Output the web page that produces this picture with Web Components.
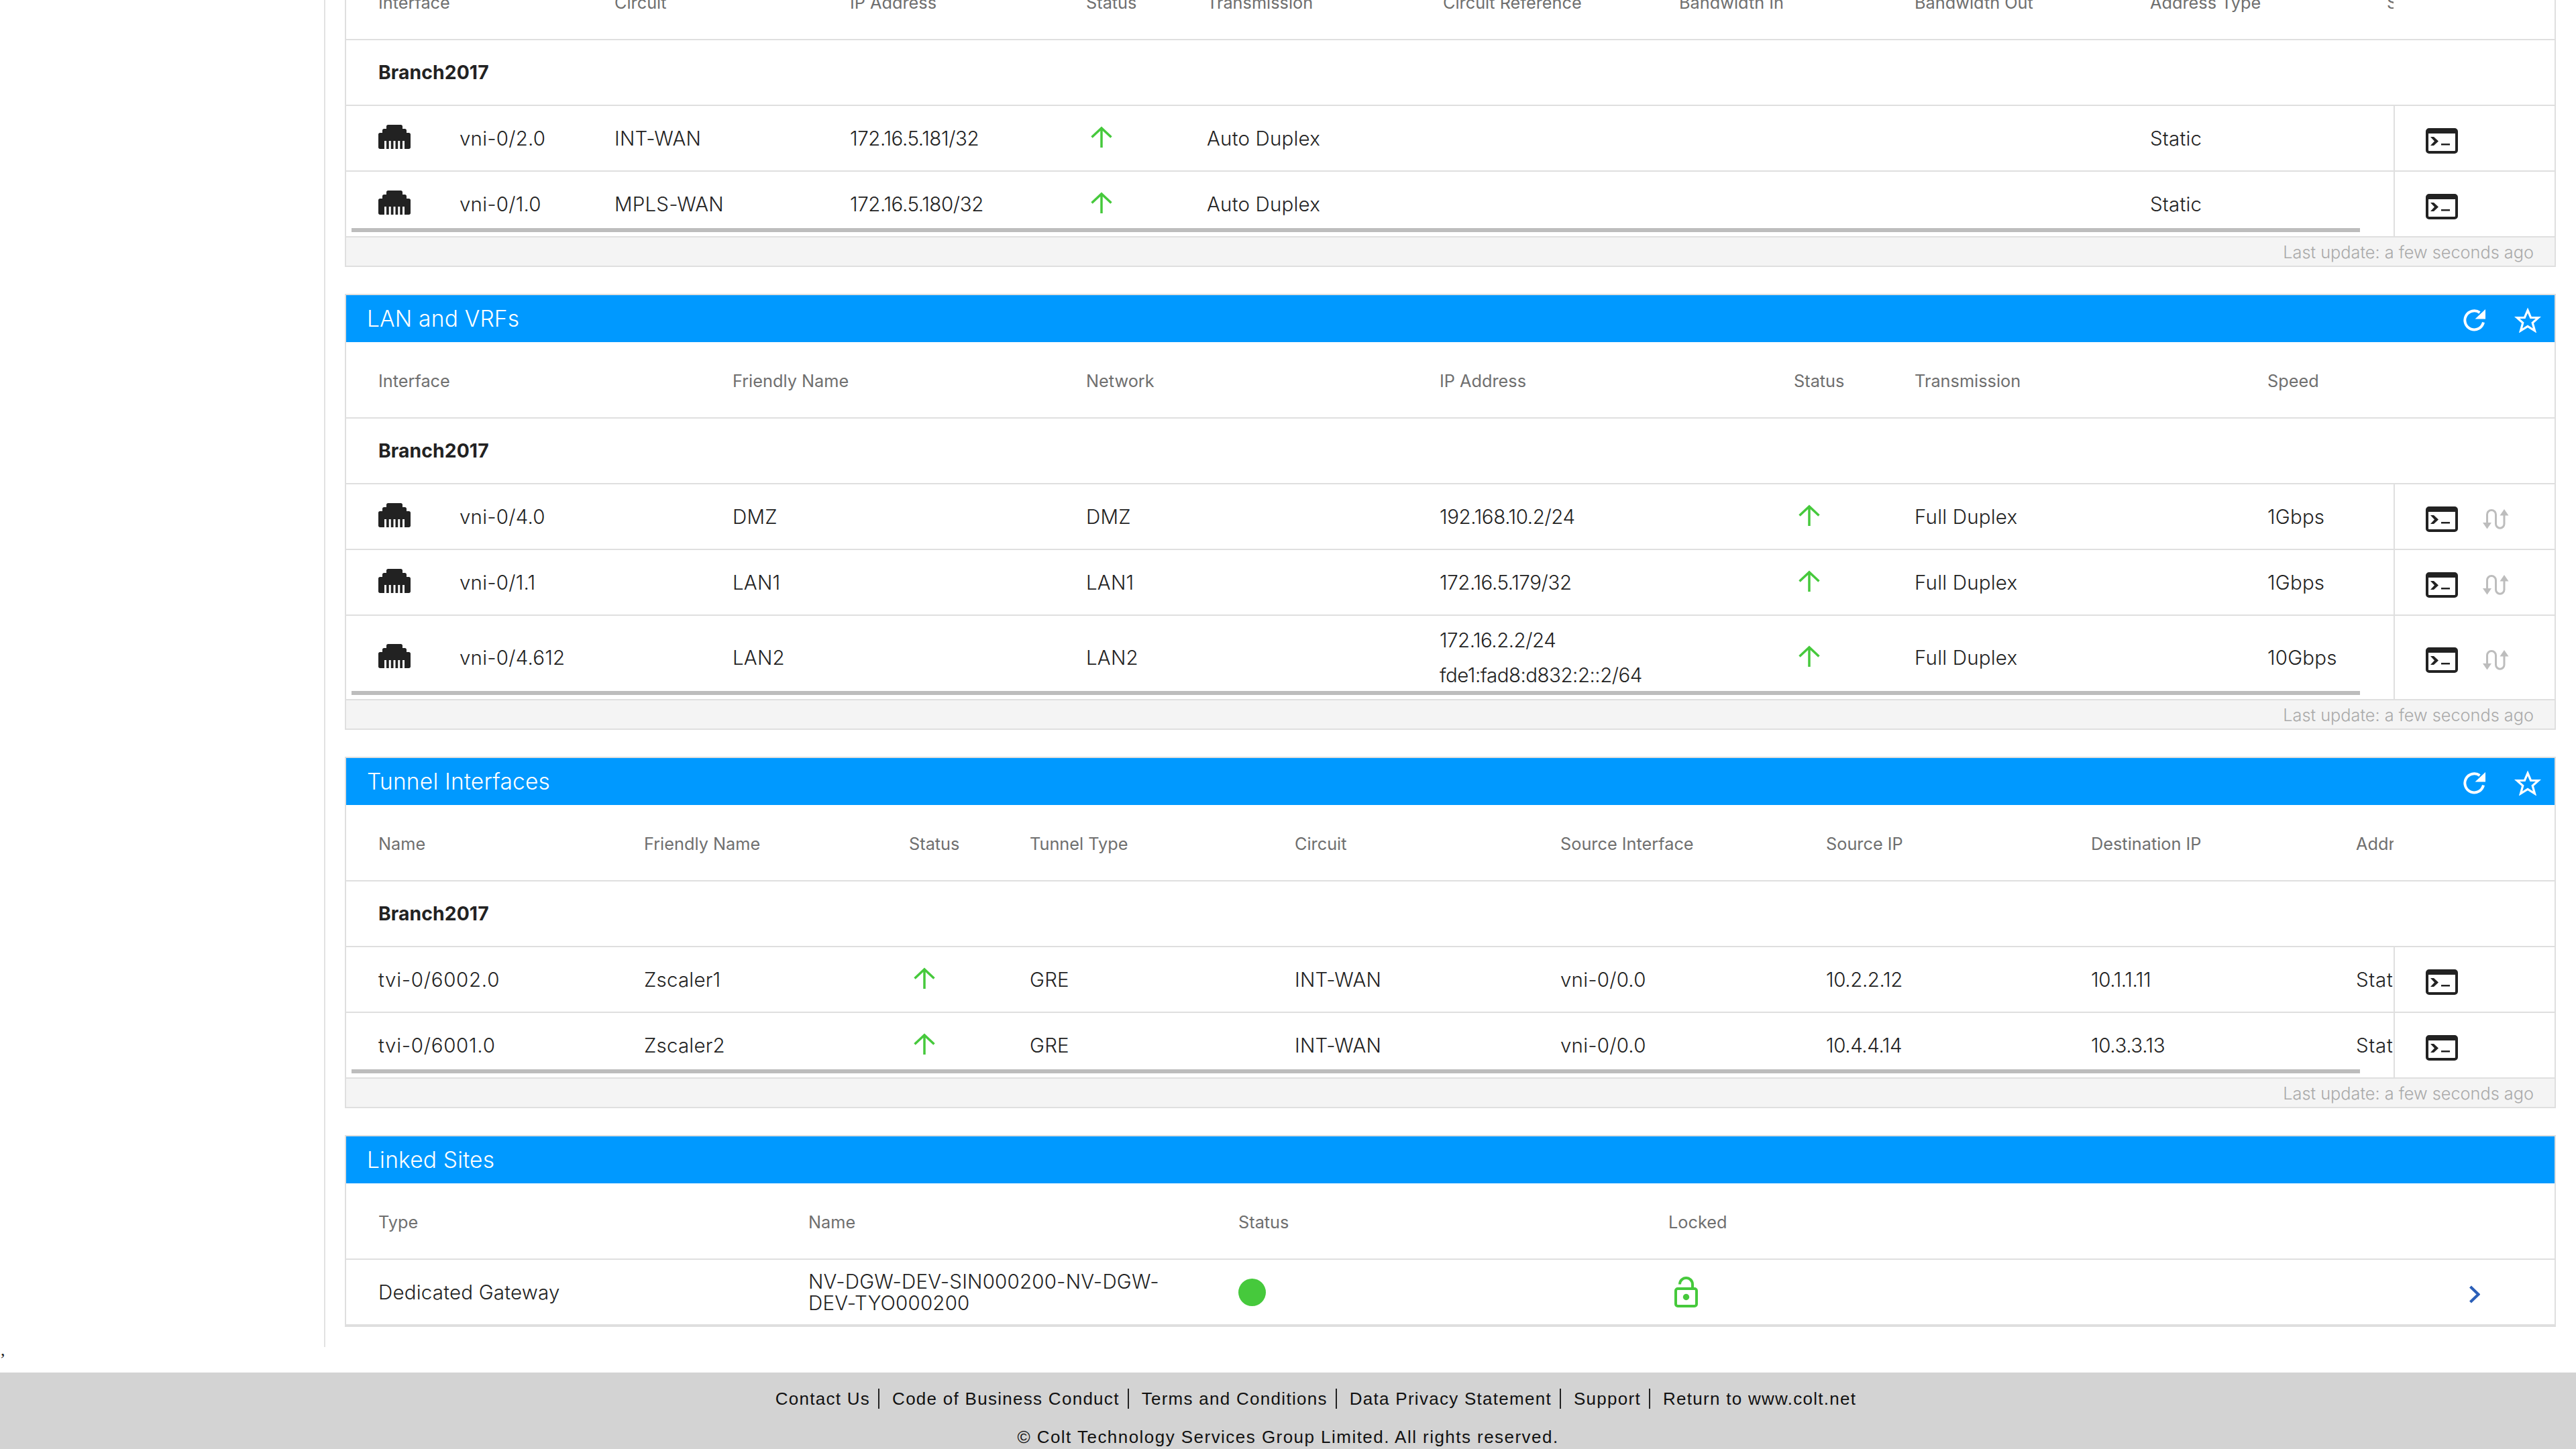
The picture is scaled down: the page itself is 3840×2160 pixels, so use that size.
<!DOCTYPE html>
<html><head><meta charset="utf-8"><style>
html,body{margin:0;padding:0;background:#fff;height:2160px;overflow:hidden}
body{font-family:Inter,"Liberation Sans",sans-serif;color:#222}
</style></head><body>
<script>
const ICONS={
 port:'<svg viewBox="0 0 48 36" width="48" height="36"><path fill="#222" d="M12 2.500C12 1 13 0 14.500 0h19C35 0 36 1 36 2.500V6h3.500C41 6 42 7 42 8.500V12h3.500C47 12 48 13 48 14.500V33.500C48 35 47 36 45.500 36H2.500C1 36 0 35 0 33.500V14.500C0 13 1 12 2.500 12H6V8.500C6 7 7 6 8.500 6H12z"/><path fill="#fff" d="M9 24h3v12H9zM15.750 24h3v12h-3zM22.500 24h3v12h-3zM29.250 24h3v12h-3zM36 24h3v12h-3z"/></svg>',
 term:'<svg viewBox="0 0 48 38" width="48" height="38"><path fill="#222" fill-rule="evenodd" d="M5 0h38a5 5 0 0 1 5 5v28a5 5 0 0 1-5 5H5a5 5 0 0 1-5-5V5a5 5 0 0 1 5-5zM4 8v25a1 1 0 0 0 1 1h38a1 1 0 0 0 1-1V8z"/><path fill="#222" d="M7 13h5l7 6.500-7 6.500H7l6-6.500zM23 23h13v2.500H23z"/></svg>',
 graph:'<svg viewBox="0 0 39 30" width="39" height="30"><path fill="none" stroke="#bdbdbd" stroke-width="3" d="M6.500 22V8a6.500 6.500 0 0 1 13 0V22a6.250 6.250 0 0 0 12.500 0V8"/><path fill="#bdbdbd" d="M0 20h13l-6.500 9.500zM25.500 9.500h13L32 0z"/></svg>',
 up:'<svg viewBox="0 0 32 32" width="32" height="32"><path fill="none" stroke="#46c93c" stroke-width="3.500" d="M16 32V3M1.500 16.500L16 3l14.500 13.500"/></svg>',
 refresh:'<svg viewBox="0 0 33 33" width="33" height="33"><path fill="none" stroke="#fff" stroke-width="4" d="M30 19.500A14 14 0 1 1 24.500 5"/><path fill="#fff" d="M33 0v14.500H17.500z"/></svg>',
 star:'<svg viewBox="0 0 40 38" width="40" height="38"><path fill="none" stroke="#fff" stroke-width="3.200" d="M20 4.500l4.600 10.800 11.400.200-8.800 7.800 3.300 11.700-10.500-6.500-10.500 6.500 3.300-11.700-8.800-7.800 11.400-.200z"/></svg>',
 lock:'<svg viewBox="0 0 35 46" width="35" height="46"><path fill="none" stroke="#46c93c" stroke-width="4" d="M8 11.500a9.500 9.500 0 0 1 19 0V16"/><rect x="2" y="18" width="31" height="26" rx="3" fill="none" stroke="#46c93c" stroke-width="4"/><circle cx="17.500" cy="30.500" r="4.700" fill="#46c93c"/></svg>',
 chev:'<svg viewBox="0 0 17 27" width="17" height="27"><path fill="none" stroke="#2b5fb8" stroke-width="4.200" d="M2.500 2l12 11.500-12 11.500"/></svg>'
};
class XIcon extends HTMLElement{connectedCallback(){if(this.shadowRoot)return;const s=this.attachShadow({mode:'open'});
 s.innerHTML='<style>:host{display:inline-flex;flex:none}:host([name=up]){margin:0 0 4px 7px}:host([name=port]){margin-bottom:4px}:host([name=lock]){margin-left:9px}svg{display:block}</style>'+ICONS[this.getAttribute('name')];}}
customElements.define('x-icon',XIcon);

class XPanel extends HTMLElement{connectedCallback(){if(this.shadowRoot)return;const s=this.attachShadow({mode:'open'});
 const title=this.getAttribute('title');const actions=this.hasAttribute('actions');const foot=this.hasAttribute('foot');
 s.innerHTML=`<style>
 :host{display:block;border:2px solid #dfdfdf;box-sizing:border-box;background:#fff}
 .bar{height:70px;background:#0099ff;color:#fff;font-size:33.500px;font-weight:300;letter-spacing:.2px;display:flex;align-items:center;padding:0 20px 0 31px;justify-content:space-between}
 .acts{display:flex;gap:43px;align-items:center;padding-top:4px}
 .foot{height:42px;background:#f4f4f4;border-top:2px solid #dfdfdf;color:#aaa;font-size:25.300px;font-weight:300;display:flex;align-items:center;justify-content:flex-end;padding-right:31px}
 .body{position:relative}
 .sb{position:absolute;left:8px;width:2994px;bottom:6px;height:6px;background:#bdbdbd}
 </style>
 ${title?`<div class="bar"><span>${title}</span>${actions?'<span class="acts"><x-icon name="refresh"></x-icon><x-icon name="star"></x-icon></span>':''}</div>`:''}
 <div class="body"><slot></slot>${foot?'<div class="sb"></div>':''}</div>
 ${foot?'<div class="foot">Last update: a few seconds ago</div>':''}`;}}
customElements.define('x-panel',XPanel);

class XRow extends HTMLElement{connectedCallback(){if(this.shadowRoot)return;const s=this.attachShadow({mode:'open'});
 const act=this.getAttribute('act');
 const actions=act?act.split(',').map(n=>`<x-icon name="${n}"></x-icon>`).join(''):'';
 s.innerHTML=`<style>
 :host{display:flex;box-sizing:border-box;border-bottom:2px solid #dfdfdf;height:var(--h,98px);font-size:var(--fs,29.500px);font-weight:var(--fw,300);letter-spacing:.2px;color:#222}
 :host([kind=head]){--h:114px;--fs:25.300px;--fw:400;color:#6f6f6f;padding-top:3px;letter-spacing:0}
 :host([kind=group]){--fw:700;--fs:28.300px;letter-spacing:.1px}
 :host([last]){border-bottom:0;--h:96px}
 .cols{flex:none;width:var(--clip,3052px);overflow:hidden;display:grid;grid-template-columns:var(--cols);align-items:center}
 .act{flex:1;display:flex;align-items:center;gap:37px;padding:8px 0 0 46px;border-left:2px solid #dfdfdf}
 :host([kind=head]) .act,:host([kind=group]) .act{border-left-color:transparent}
 </style><div class="cols"><slot></slot></div><div class="act">${actions}</div>`;}}
customElements.define('x-row',XRow);

class XCell extends HTMLElement{connectedCallback(){if(this.shadowRoot)return;const s=this.attachShadow({mode:'open'});
 s.innerHTML=`<style>:host{display:flex;align-items:center;gap:73px;padding-left:48px;white-space:nowrap;min-width:0;line-height:34px}
 :host([num]){letter-spacing:-.4px}
 :host([wide]){letter-spacing:.7px}
 :host([wrap]){line-height:32px}
 :host([multi]){flex-direction:column;align-items:flex-start;gap:0;line-height:52px;letter-spacing:-.5px}
 </style><slot></slot>`;}}
customElements.define('x-cell',XCell);

class XFoot extends HTMLElement{connectedCallback(){if(this.shadowRoot)return;const s=this.attachShadow({mode:'open'});
 const links=['Contact Us','Code of Business Conduct','Terms and Conditions','Data Privacy Statement','Support','Return to www.colt.net'];
 s.innerHTML=`<style>
 :host{display:block;background:#d3d3d3;height:114px;font-family:"Liberation Sans",Arial,sans-serif;font-size:26px;letter-spacing:1.460px;color:#111;text-align:center;overflow:hidden}
 .l{display:flex;justify-content:center;padding:24px 0 0 76px;height:30px;line-height:30px;letter-spacing:1.280px}
 .l span{padding:0 12px 0 19px;border-right:2px solid #222}
 .l span:last-child{border:0}
 .c{margin-top:26px;line-height:32px}
 </style><div class="l">${links.map(l=>`<span>${l}</span>`).join('')}</div><div class="c">© Colt Technology Services Group Limited. All rights reserved.</div>`;}}
customElements.define('x-foot',XFoot);

class XPage extends HTMLElement{connectedCallback(){if(this.shadowRoot)return;const s=this.attachShadow({mode:'open'});
 s.innerHTML=`<style>
 :host{display:block;width:3840px;height:2160px;overflow:hidden;position:relative}
 .top{display:flex;height:2008px;align-items:flex-start}
 .side{flex:none;width:483px;height:2008px;border-right:2px solid #e2e2e2}
 .main{flex:none;width:3296px;margin-left:29px;margin-top:-56px}
 ::slotted(x-panel){margin-bottom:40px}
 .comma{height:38px;font-size:26px;line-height:10px;padding-left:1px;color:#222;font-family:"Liberation Serif",serif}
 </style><div class="top"><div class="side"></div><div class="main"><slot></slot></div></div><div class="comma">,</div><slot name="foot"></slot>`;}}
customElements.define('x-page',XPage);

const wanCols='352px 351px 352px 180px 352px 352px 351px 351px 353px 352px';
const lanCols='528px 527px 527px 528px 180px 526px 527px';
const tunCols='396px 395px 180px 395px 396px 396px 395px 395px 400px';
const lnkCols='641px 641px 641px 641px';
const c=(t,a='')=>`<x-cell ${a}>${t}</x-cell>`;
const n=t=>c(t,'num');
const w=t=>c(t,'wide');
const up='<x-icon name="up"></x-icon>';
const ifc=t=>c(`<x-icon name="port"></x-icon><span>${t}</span>`);
const head=a=>`<x-row kind="head">${a.map(t=>c(t)).join('')}</x-row>`;
const grp=`<x-row kind="group">${c('Branch2017')}</x-row>`;
const row=(cells,act,extra='')=>`<x-row act="${act}" ${extra}>${cells.join('')}</x-row>`;
const html=`
<x-page>
<x-panel foot style="--cols:${wanCols}">
 ${head(['Interface','Circuit','IP Address','Status','Transmission','Circuit Reference','Bandwidth In','Bandwidth Out','Address Type','Status'])}
 ${grp}
 ${row([ifc('vni-0/2.0'),c('INT-WAN'),n('172.16.5.181/32'),c(up),c('Auto Duplex'),c(''),c(''),c(''),c('Static')],'term')}
 ${row([ifc('vni-0/1.0'),c('MPLS-WAN'),n('172.16.5.180/32'),c(up),c('Auto Duplex'),c(''),c(''),c(''),c('Static')],'term','last')}
</x-panel>
<x-panel title="LAN and VRFs" actions foot style="--cols:${lanCols}">
 ${head(['Interface','Friendly Name','Network','IP Address','Status','Transmission','Speed'])}
 ${grp}
 ${row([ifc('vni-0/4.0'),c('DMZ'),c('DMZ'),n('192.168.10.2/24'),c(up),c('Full Duplex'),c('1Gbps')],'term,graph')}
 ${row([ifc('vni-0/1.1'),c('LAN1'),c('LAN1'),n('172.16.5.179/32'),c(up),c('Full Duplex'),c('1Gbps')],'term,graph')}
 <x-row act="term,graph" last style="--h:124px">${[ifc('vni-0/4.612'),c('LAN2'),c('LAN2'),c('<span>172.16.2.2/24</span><span>fde1:fad8:d832:2::2/64</span>','multi'),c(up),c('Full Duplex'),c('10Gbps')].join('')}</x-row>
</x-panel>
<x-panel title="Tunnel Interfaces" actions foot style="--cols:${tunCols}">
 ${head(['Name','Friendly Name','Status','Tunnel Type','Circuit','Source Interface','Source IP','Destination IP','Address Type'])}
 ${grp}
 ${row([w('tvi-0/6002.0'),c('Zscaler1'),c(up),c('GRE'),c('INT-WAN'),c('vni-0/0.0'),n('10.2.2.12'),n('10.1.1.11'),w('Static')],'term')}
 ${row([w('tvi-0/6001.0'),c('Zscaler2'),c(up),c('GRE'),c('INT-WAN'),c('vni-0/0.0'),n('10.4.4.14'),n('10.3.3.13'),w('Static')],'term','last')}
</x-panel>
<x-panel title="Linked Sites" style="--cols:${lnkCols};--clip:3292px;border-bottom-width:4px">
 ${`<x-row kind="head">${['Type','Name','Status','Locked'].map(t=>c(t)).join('')}</x-row>`}
 <x-row last style="position:relative">${c('Dedicated Gateway')}${c('<span>NV-DGW-DEV-SIN000200-NV-DGW-<br>DEV-TYO000200</span>','wrap')}${c('<span style="width:41px;height:41px;border-radius:50%;background:#46c93c;display:block"></span>')}${c('<x-icon name="lock"></x-icon>')}<x-icon name="chev" style="position:absolute;right:111px;top:38px"></x-icon></x-row>
</x-panel>
<x-foot slot="foot"></x-foot>
</x-page>`;
document.body.insertAdjacentHTML('afterbegin',html);
</script>
</body></html>
